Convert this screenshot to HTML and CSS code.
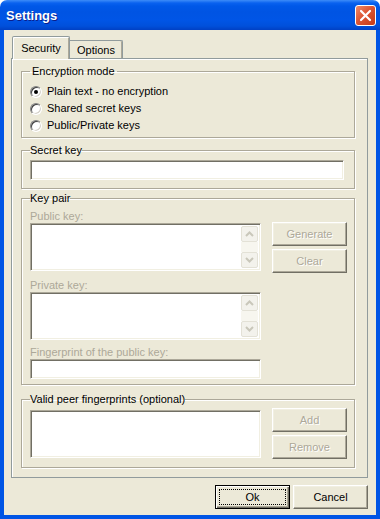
FILE: index.html
```html
<!DOCTYPE html>
<html>
<head>
<meta charset="utf-8">
<title>Settings</title>
<link rel="stylesheet" href="styles.css">
</head>
<body>
<div class="window">
  <div class="titlebar">
    <span class="title">Settings</span>
    <span class="close">
      <svg width="19" height="19" viewBox="0 0 19 19"><path d="M5 5 L14 14 M14 5 L5 14" stroke="#fff" stroke-width="2.2" stroke-linecap="round"/></svg>
    </span>
  </div>
  <div class="client">
    <div class="tabs">
      <div class="tab active">Security</div>
      <div class="tab">Options</div>
    </div>
    <div class="panel">
      <fieldset class="group g-mode">
        <legend>Encryption mode</legend>
        <div class="radio"><span class="dot checked"></span>Plain text - no encryption</div>
        <div class="radio"><span class="dot"></span>Shared secret keys</div>
        <div class="radio"><span class="dot"></span>Public/Private keys</div>
      </fieldset>

      <fieldset class="group g-secret">
        <legend>Secret key</legend>
        <div class="sunken edit wide"></div>
      </fieldset>

      <fieldset class="group g-pair">
        <legend>Key pair</legend>
        <div class="pair">
          <div class="fields">
            <div class="caption">Public key:</div>
            <div class="sunken memo">
              <div class="memo-text"></div>
              <div class="scroll">
                <span class="sbtn"><svg width="15" height="14" viewBox="0 0 15 14"><polyline points="4,9 7.5,5.5 11,9" fill="none" stroke="#C9C7BA" stroke-width="2"/></svg></span>
                <span class="track"></span>
                <span class="sbtn"><svg width="15" height="14" viewBox="0 0 15 14"><polyline points="4,5 7.5,8.5 11,5" fill="none" stroke="#C9C7BA" stroke-width="2"/></svg></span>
              </div>
            </div>
            <div class="caption gap">Private key:</div>
            <div class="sunken memo">
              <div class="memo-text"></div>
              <div class="scroll">
                <span class="sbtn"><svg width="15" height="14" viewBox="0 0 15 14"><polyline points="4,9 7.5,5.5 11,9" fill="none" stroke="#C9C7BA" stroke-width="2"/></svg></span>
                <span class="track"></span>
                <span class="sbtn"><svg width="15" height="14" viewBox="0 0 15 14"><polyline points="4,5 7.5,8.5 11,5" fill="none" stroke="#C9C7BA" stroke-width="2"/></svg></span>
              </div>
            </div>
            <div class="caption gap2">Fingerprint of the public key:</div>
            <div class="sunken edit"></div>
          </div>
          <div class="side top13">
            <div class="btn off">Generate</div>
            <div class="btn off">Clear</div>
          </div>
        </div>
      </fieldset>

      <fieldset class="group g-peers">
        <legend>Valid peer fingerprints (optional)</legend>
        <div class="pair">
          <div class="fields">
            <div class="sunken memo peers"></div>
          </div>
          <div class="side">
            <div class="btn off">Add</div>
            <div class="btn off">Remove</div>
          </div>
        </div>
      </fieldset>
    </div>
    <div class="footer">
      <div class="btn default">Ok</div>
      <div class="btn">Cancel</div>
    </div>
  </div>
</div>
</body>
</html>
```

FILE: styles.css
```css
body{ margin:0; background:#fff; font-family:"Liberation Sans", Arial, sans-serif; font-size:11px; line-height:13px; color:#000;}
.window{ width:380px; height:519px; display:flex; flex-direction:column;}

/* title bar */
.titlebar{ flex:none; height:30px; box-sizing:border-box; padding:0 4px 0 6px; display:flex; align-items:center; justify-content:space-between; border-radius:7px 7px 0 0;
  background:linear-gradient(#3D8CF8 0px, #0A62EF 3px, #0058E8 6px, #0054E3 12px, #0055E6 20px, #0050DB 26px, #0040C4 30px);}
.title{ color:#fff; font-weight:bold; font-size:13px; text-shadow:1px 1px #0A1E8C; margin-top:1px;}
.close{ width:19px; height:19px; display:flex; border:1px solid #fff; border-radius:3px; margin-top:1px;
  background:linear-gradient(135deg, #EE8B6C 0%, #DD5634 45%, #C63A17 100%);}

/* client area */
.client{ flex:1; display:flex; flex-direction:column; background:#ECE9D8; border:4px solid #0055E5; border-top:0; padding:6px 8px 0 7px;}
.tabs{ display:flex; align-items:flex-end; height:22px; padding-left:1px; position:relative; z-index:1;}
.tab{ box-sizing:border-box; height:18px; line-height:16px; text-align:center; border:1px solid #919B9C; border-bottom:0; border-left:0; border-radius:0 2px 0 0; background:#ECE9D8; box-shadow:inset -1px 0 #ACA899; width:53px; padding-top:1px;}
.tab.active{ height:23px; margin-bottom:-1px; width:58px; line-height:20px; border-left:1px solid #919B9C; border-radius:2px 2px 0 0; box-shadow:inset 1px 1px #fff, inset -1px 0 #ACA899;}
.panel{ border:1px solid #919B9C; box-shadow:inset 1px 1px #fff; padding:0 12px 9px 9px;}

/* group boxes */
.group{ margin:0; min-width:0; border:1px solid #ACA899; box-shadow:1px 1px 0 #fff, inset 1px 1px 0 #fff; padding:0 7px 0 8px;}
.group legend{ padding:0; margin:0; line-height:13px;}
.g-mode{ margin-top:6px; padding-top:5px; padding-bottom:3px;}
.g-mode legend{ padding:0 2px;}
.g-secret{ margin-top:6px; padding-top:3px; padding-bottom:8px;}
.g-pair{ margin-top:3px; padding-top:4px; padding-bottom:5px;}
.g-peers{ margin-top:8px; padding-top:2px; padding-bottom:8px;}

.radio{ height:17px; display:flex; align-items:center;}
.dot{ width:12px; height:12px; box-sizing:border-box; border-radius:50%; margin-right:5px; background:#fff; display:flex; align-items:center; justify-content:center;
  border:1px solid; border-color:#808080 #fff #fff #808080; box-shadow:inset 1px 1px #404040, inset -1px -1px #D4D0C8;}
.dot.checked:after{ content:''; width:4px; height:4px; border-radius:50%; background:#000;}

/* edits */
.sunken{ box-sizing:border-box; background:#fff; border:1px solid; border-color:#ACA899 #fff #fff #ACA899; box-shadow:inset 1px 1px #716F64, inset -1px -1px #F1EFE2;}
.edit{ height:20px;}
.edit.wide{ width:314px;}
.memo{ height:48px; display:flex; padding:2px;}
.memo.peers{ margin-top:2px;}
.memo-text{ flex:1;}
.scroll{ width:17px; display:flex; flex-direction:column;}
.sbtn{ height:16px; box-sizing:border-box; border:1px solid #E3E1D6; border-radius:2px; background:#F3F2EC; display:flex; align-items:center; justify-content:center;}
.track{ flex:1; background:#F7F6EF;}

.caption{ height:14px; line-height:14px; color:#ACA899;}
.caption.gap{ margin-top:7px;}
.caption.gap2{ margin-top:5px;}

.pair{ display:flex; gap:11px;}
.fields{ width:231px; display:flex; flex-direction:column;}
.side{ width:75px; display:flex; flex-direction:column; gap:3px;}
.side.top13{ margin-top:13px;}

/* buttons */
.btn{ box-sizing:border-box; width:75px; height:24px; line-height:22px; text-align:center; background:#ECE9D8;
  border:1px solid; border-color:#fff #716F64 #716F64 #fff; box-shadow:inset -1px -1px #ACA899, inset 1px 1px #F1EFE2;}
.btn.off{ color:#ACA899; text-shadow:1px 1px #fff;}
.btn.default{ border:1px solid #000; box-shadow:inset 1px 1px #fff, inset -1px -1px #716F64, inset -2px -2px #ACA899; outline:1px dotted #000; outline-offset:-5px;}
.footer{ display:flex; justify-content:flex-end; gap:3px; margin-top:7px;}
```
